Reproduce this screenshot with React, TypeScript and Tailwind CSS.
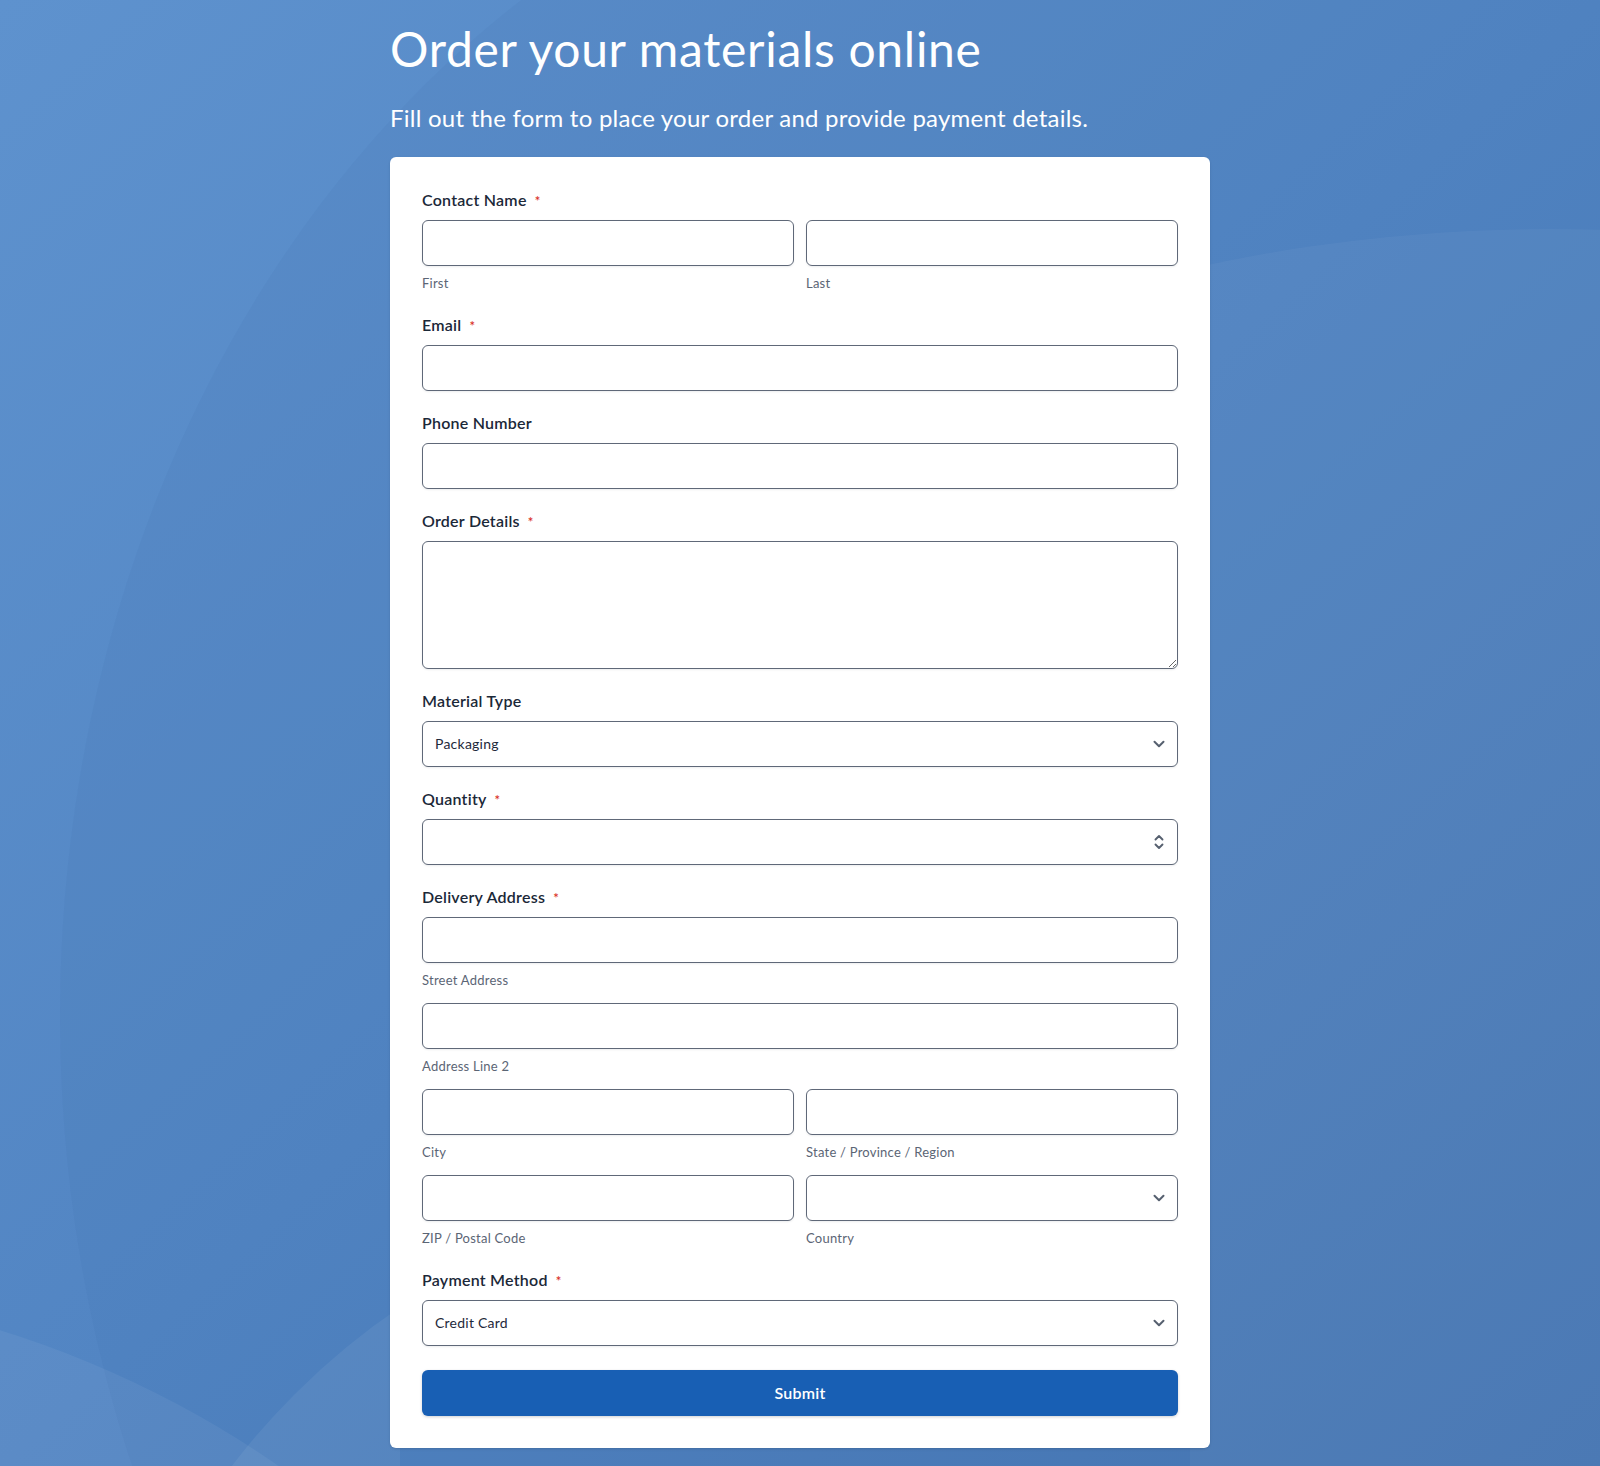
import React from 'react';

const inputCls =
  'block w-full h-[46px] rounded-md border border-[#5f6878] bg-white px-3 text-sm text-[#1e293b] shadow-[0_1px_2px_rgba(15,23,42,0.08)] outline-none';

function Label({ text, required }: { text: string; required?: boolean }) {
  return (
    <div className="mb-2 flex items-center h-6 text-base font-semibold text-[#1b2838]">
      {text}
      {required && <span className="ml-2 translate-y-[2px] text-[13px] text-[#d93025]">*</span>}
    </div>
  );
}

function Sub({ text }: { text: string }) {
  return <div className="mt-2 h-[19px] leading-[19px] text-[13px] text-[#5b6575]">{text}</div>;
}

function Chevron() {
  return (
    <svg
      className="pointer-events-none absolute right-[13px] top-1/2 -translate-y-1/2"
      width="12"
      height="8"
      viewBox="0 0 12 8"
      fill="none"
    >
      <path d="M1.5 1.8l4.5 4.4 4.5-4.4" stroke="#56606f" strokeWidth="2" strokeLinecap="round" strokeLinejoin="round" />
    </svg>
  );
}

function SelectBox({ value, options }: { value: string; options: string[] }) {
  return (
    <div className="relative">
      <select defaultValue={value} className={inputCls + ' appearance-none pr-10'}>
        {options.map((o) => (
          <option key={o} value={o}>
            {o}
          </option>
        ))}
      </select>
      <Chevron />
    </div>
  );
}

export default function App() {
  return (
    <div className="relative min-h-[1466px] overflow-hidden bg-gradient-to-br from-[#5e92ce] via-[#5285c3] to-[#4677b4] font-['Lato','Noto_Sans',sans-serif] tracking-[0.015em]">
      {/* soft background shapes */}
      <div className="pointer-events-none absolute left-[60px] top-[-190px] h-[2412px] w-[2000px] rounded-[50%] bg-[#1f4f8f]/[0.05]" />
      <div className="pointer-events-none absolute inset-y-0 left-[1190px] right-0 overflow-hidden">
        <div className="absolute left-[-1290px] top-[229px] h-[3300px] w-[3300px] rounded-full bg-white/[0.04]" />
      </div>
      <div className="pointer-events-none absolute inset-y-0 left-0 w-[400px] overflow-hidden">
        <div className="absolute left-[85px] top-[1185px] h-[1430px] w-[1430px] rounded-full bg-white/[0.06]" />
        <div className="absolute left-[-1315px] top-[1285px] h-[2030px] w-[2030px] rounded-full bg-white/[0.05]" />
      </div>

      <div className="relative mx-auto w-[820px] pt-5 pb-5">
        <h1 className="text-[48px] leading-[1.2] font-normal tracking-[0.7px] text-white">Order your materials online</h1>
        <p className="mt-[22px] text-[24px] leading-9 text-white">
          Fill out the form to place your order and provide payment details.
        </p>

        <form className="mt-[21px] rounded-md bg-white px-8 pt-[31px] pb-8 shadow-sm">
          <div className="flex flex-col gap-5">
            <div>
              <Label text="Contact Name" required />
              <div className="grid grid-cols-2 gap-3">
                <div>
                  <input className={inputCls} />
                  <Sub text="First" />
                </div>
                <div>
                  <input className={inputCls} />
                  <Sub text="Last" />
                </div>
              </div>
            </div>

            <div>
              <Label text="Email" required />
              <input type="email" className={inputCls} />
            </div>

            <div>
              <Label text="Phone Number" />
              <input type="tel" className={inputCls} />
            </div>

            <div>
              <Label text="Order Details" required />
              <textarea className={inputCls.replace('h-[46px]', 'h-[128px]') + ' py-2'} />
            </div>

            <div>
              <Label text="Material Type" />
              <SelectBox value="Packaging" options={['Packaging', 'Raw Materials', 'Components']} />
            </div>

            <div>
              <Label text="Quantity" required />
              <div className="relative">
                <input type="text" inputMode="numeric" className={inputCls} />
                <svg
                  className="pointer-events-none absolute right-[13px] top-1/2 -translate-y-1/2"
                  width="12"
                  height="18"
                  viewBox="0 0 12 18"
                  fill="none"
                >
                  <path d="M2.5 6.5L6 3l3.5 3.5M2.5 11.5L6 15l3.5-3.5" stroke="#56606f" strokeWidth="1.9" strokeLinecap="round" strokeLinejoin="round" />
                </svg>
              </div>
            </div>

            <div>
              <Label text="Delivery Address" required />
              <div className="flex flex-col gap-[13px]">
                <div>
                  <input className={inputCls} />
                  <Sub text="Street Address" />
                </div>
                <div>
                  <input className={inputCls} />
                  <Sub text="Address Line 2" />
                </div>
                <div className="grid grid-cols-2 gap-3">
                  <div>
                    <input className={inputCls} />
                    <Sub text="City" />
                  </div>
                  <div>
                    <input className={inputCls} />
                    <Sub text="State / Province / Region" />
                  </div>
                </div>
                <div className="grid grid-cols-2 gap-3">
                  <div>
                    <input className={inputCls} />
                    <Sub text="ZIP / Postal Code" />
                  </div>
                  <div>
                    <SelectBox value="" options={['', 'United States', 'Canada', 'United Kingdom']} />
                    <Sub text="Country" />
                  </div>
                </div>
              </div>
            </div>

            <div>
              <Label text="Payment Method" required />
              <SelectBox value="Credit Card" options={['Credit Card', 'Bank Transfer', 'PayPal']} />
            </div>
          </div>

          <button
            type="button"
            className="mt-6 block h-[46px] w-full rounded-md bg-[#185fb4] text-base font-semibold text-white shadow-[0_1px_3px_rgba(15,23,42,0.2)]"
          >
            Submit
          </button>
        </form>
      </div>
    </div>
  );
}
